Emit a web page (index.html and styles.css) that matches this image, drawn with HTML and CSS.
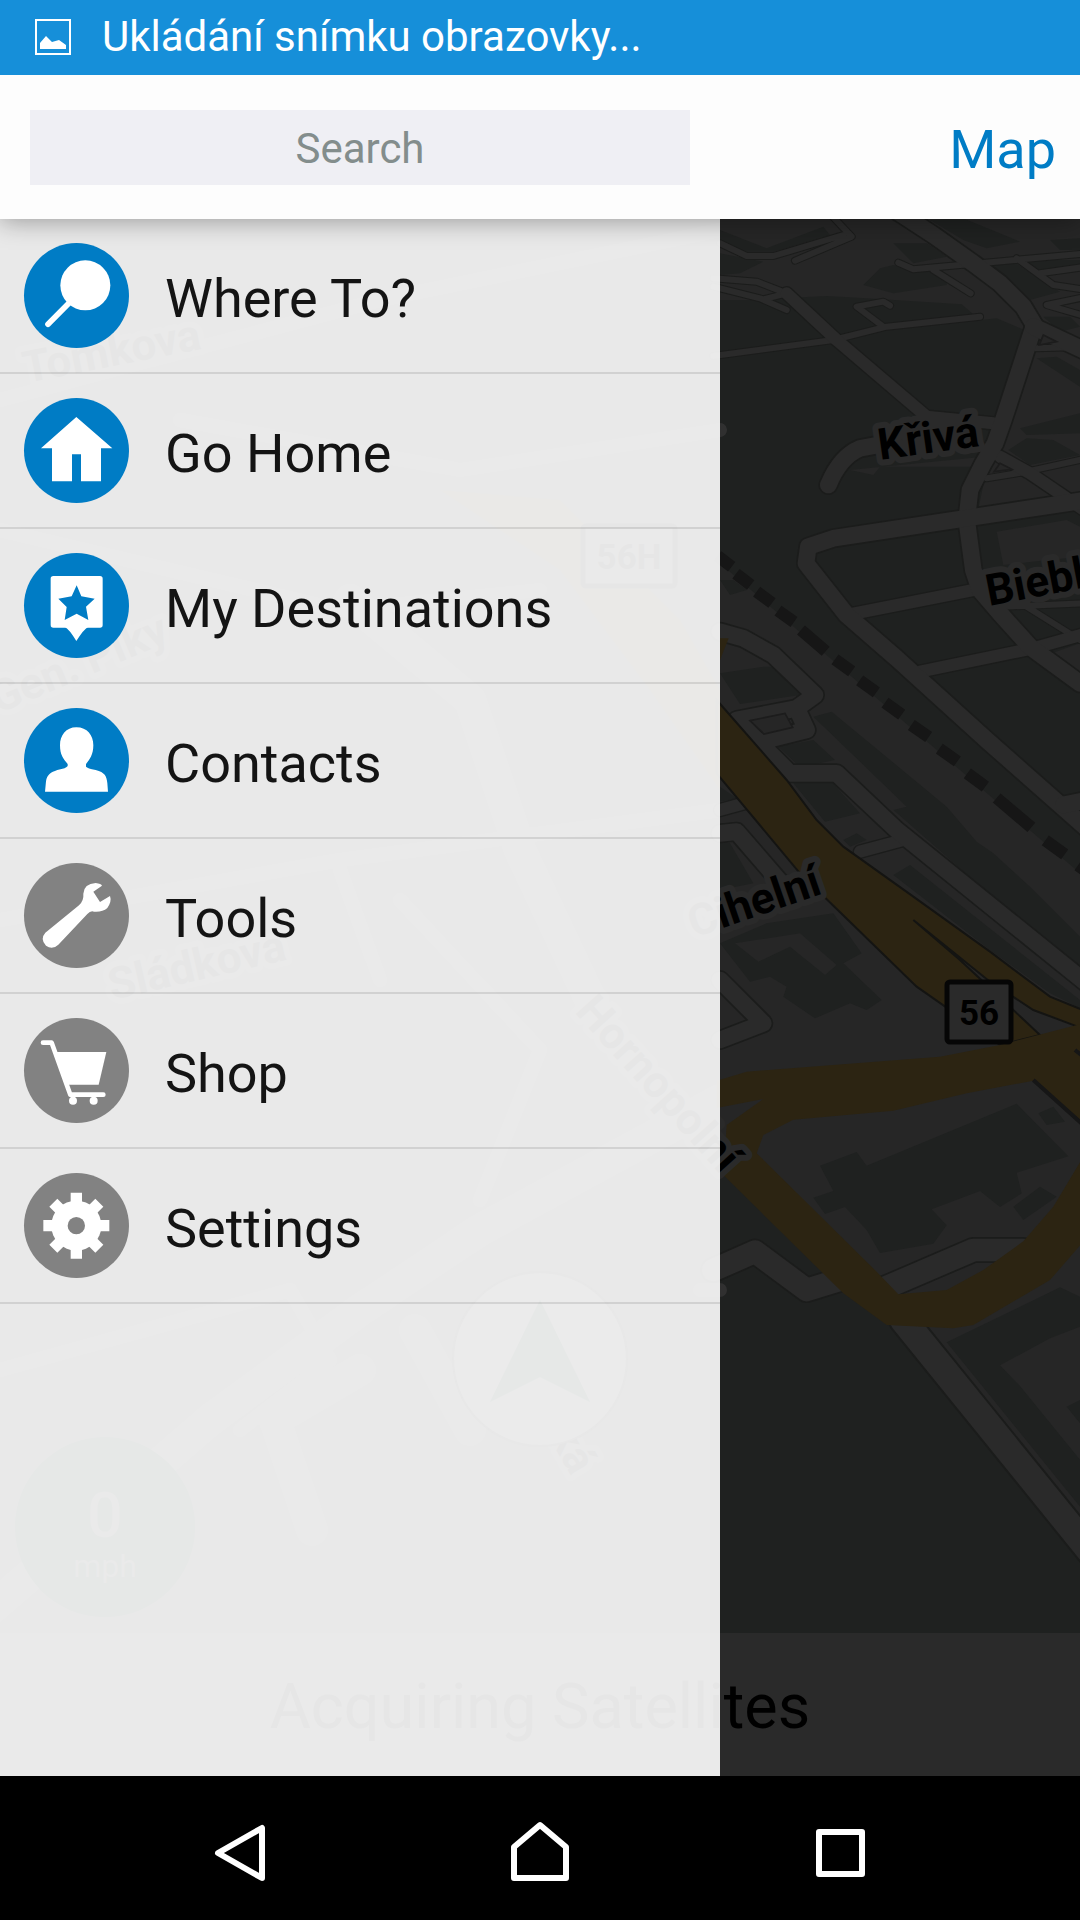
FILE: index.html
```html
<!DOCTYPE html>
<html lang="en">
    <head>
        <meta charset="utf-8">
        <meta name="viewport" content="width=device-width, initial-scale=1.0">
        <title>Navigation menu</title>
        <link rel="stylesheet" href="styles.css">
    </head>
    <body>
        <div id="wrapper">
            <div class="status-bar" lang="cs"> <!-- android notification ticker -->
                <svg class="status-icon" viewBox="0 0 36 36" aria-hidden="true">
                    <rect x="1" y="1" width="34" height="34" fill="none" stroke="#fff" stroke-width="2"/>
                    <path d="M5 30V24L11 17L17 23L24 21L31 26V30Z" fill="#fff"/>
                </svg>
                <span>Ukládání snímku obrazovky...</span>
            </div>
            <header>
                <input class="search" type="text" placeholder="Search" aria-label="Search">
                <a class="map-link" href="#map">Map</a>
            </header>
            <main>
                <svg class="map" id="map" viewBox="0 219 1080 1414" preserveAspectRatio="xMidYMid slice" aria-hidden="true">
                    <defs>
                        <!-- roads of the right half, drawn twice: casing, then surface -->
                        <g id="roads-wide">
                            <path d="M570 -10L700 75L820 160L900 220L970 290L1003 345L985 400L910 630L885 700L850 760L810 840L800 930L820 1080L840 1140L900 1210L990 1310L1140 1420"/>
                            <path d="M1000 350L1160 425M1160 870L400 985L325 1010L318 1060L440 1215L590 1345L860 1590L1160 1855"/>
                            <path d="M1090 1785L1160 1770M385 825Q420 740 480 715L560 700"/>
                            <path d="M60 1265L130 1285L220 1335L345 1455L290 1495L110 1530L270 1690L410 1690L590 1860L1160 2320M290 1495L320 1560L200 1590"/>
                            <path d="M60 2310L190 2440L60 2490M60 1870L110 1865L270 2050"/>
                        </g>
                        <g id="roads-mid">
                            <path d="M260 250L410 390L680 620L880 640M440 1215L820 1140M660 1385L1000 1315L1160 1270"/>
                            <path d="M900 740L990 790L1160 905M60 1800L150 1775M480 1925L610 1890"/>
                        </g>
                        <g id="roads-narrow">
                            <path d="M40 438L400 390L560 350L840 320M550 350L470 290L550 275L570 287"/>
                            <path d="M40 205L170 215L260 250M40 230L180 265L260 300M190 268L260 250"/>
                            <path d="M370 -10L455 80L285 152M60 100L140 138L220 138L430 75"/>
                            <path d="M595 158L640 178L1160 130M700 180L812 250M950 145L1060 225L1160 240M1020 190L1160 170M1160 260L1040 285L1160 320"/>
                            <path d="M860 805L980 785L1160 745M1010 415L1160 410"/>
                            <path d="M840 1150L910 1190L1160 1180M980 1190L1140 1290"/>
                        </g>
                    </defs>
                    <!-- ground -->
                    <rect class="park" y="219" width="1080" height="1414"/>
                    <!-- left half, stays behind the drawer -->
                    <path class="block" d="M0 219H720V330L420 480L0 420ZM0 440L330 560L480 640L720 700V1190L480 1260L120 1540L0 1600Z"/>
                    <g class="park">
                        <path d="M0 700L340 650L470 700L500 830L0 900ZM300 500L360 500L350 590L305 585Z"/>
                        <path d="M40 370L140 350L160 380L80 395ZM280 340L360 325L380 350L310 370ZM480 640L640 610L680 700L560 720ZM420 920L500 960L450 1060L400 1050ZM620 620L700 640L690 800L550 825L540 790Z"/>
                        <path d="M225 940L300 930L290 1000L230 990ZM310 970L380 960L370 1015L315 1010ZM130 1000L180 995L200 1025L150 1030Z"/>
                    </g>
                    <g class="road faint">
                        <path class="faint-wide" d="M-10 1610L210 1420L360 1310L480 1230L720 1100M360 1370L275 1420L312 1530M415 1330L470 1430M350 600L470 700L520 850L600 1020"/>
                        <path d="M0 920L340 860L720 810M340 870L380 980M0 400L380 300L720 230M180 420L460 470L720 430M0 530L340 610L540 590"/>
                        <path d="M0 1370L290 1290L330 1360L240 1430M480 1200L540 1050L400 900M720 1290L700 1290"/>
                    </g>
                    <path class="highway" d="M440 490L560 500L680 620L720 690V790L650 690L560 570Z"/>
                    <svg x="700" y="210" width="380" height="1430" viewBox="0 0 1140 4290">
                        <path class="block" d="M60 0H1140V910L1080 870L830 920L870 730L920 640L985 365L890 325L840 330L785 283L500 265L380 258L150 270L60 270Z"/>
                        <path class="block" d="M60 1060L1140 1990V3960L600 3370L520 3200L170 2850L60 2790ZM890 965L1100 930L1140 950V1040L910 1065ZM1055 1330L1140 1300V1430Z"/>
                        <path class="block" d="M450 780L850 740L870 770L540 770L520 795Z"/>
                        <g class="park">
                            <path d="M60 60L200 115L370 50L390 75L220 125L140 125L60 95ZM60 130L190 155L120 190L60 195ZM490 225L540 175L580 165L740 195L740 225L580 250Z"/>
                            <path d="M690 30L790 25L960 95L860 115L790 90ZM580 100L680 100L740 140L640 160ZM860 165L940 155L1080 245L970 275L930 240ZM1050 90L1140 85V120H1080ZM980 150H1140V170L1010 180Z"/>
                            <path d="M1010 445L1070 440L1140 480V530ZM960 655L1140 610V670L980 675ZM980 685L1060 690L1140 735L990 765L925 720ZM1030 320L1110 320L1140 350L1080 365ZM60 1110L100 1110L140 1140L90 1155Z"/>
                            <path d="M60 1390L190 1370L240 1370L300 1455L120 1482ZM235 1610L340 1590L405 1650L300 1672ZM280 1720L390 1710L480 1810L375 1835ZM60 1730L110 1765L60 1775ZM430 1890L470 1870L500 1890L450 1910Z"/>
                            <path d="M340 1520L395 1505L740 1790L830 1895L880 1930L990 2030L1140 2180V2290L580 1800L620 1790ZM580 1995L630 1965L1140 2370V2395L1050 2350L870 2220Z"/>
                            <path d="M60 1890L90 1900L160 2020L60 2040ZM60 2200L200 2140L400 2110L485 2230L430 2260L545 2370L500 2400L450 2380L345 2425L250 2360L260 2330L210 2300L150 2315Z"/>
                            <path d="M360 2867L470 2826L500 2867L950 2681L1105 2839L950 2888L965 2950L900 2991L840 2943L695 2998L740 3046L700 3101L540 3129L500 3060L435 2991L375 3012L340 2963L400 2943ZM1015 2710L1060 2690L1095 2735L1040 2745ZM940 2990L1020 2930L1070 2960L970 3030Z"/>
                            <path d="M740 3397L1080 3232L1140 3260V3350L1050 3385L900 3466L960 3528L1140 3749V3890ZM1100 3590L1140 3570V3640Z"/>
                        </g>
                        <path class="block" d="M105 2200L300 2170L410 2265L375 2295L270 2210L175 2255Z"/>
                        <use href="#roads-narrow" class="casing narrow"/>
                        <use href="#roads-mid" class="casing mid"/>
                        <use href="#roads-wide" class="casing wide"/>
                        <use href="#roads-narrow" class="road narrow"/>
                        <use href="#roads-mid" class="road mid"/>
                        <use href="#roads-wide" class="road wide"/>
                        <path class="block outlined" d="M150 1532L255 1510L278 1552L192 1572Z"/>
                        <path class="block outlined" d="M1030 375L1070 395L1018 405ZM900 760L935 778L882 785Z"/>
                        <path class="casing" stroke-width="78" d="M40 3180L165 3125L320 3240L450 3200M540 3240L820 3120L970 3120"/>
                        <path class="road" stroke-width="68" d="M40 3180L165 3125L320 3240L450 3200M540 3240L820 3120L970 3120"/>
                        <path class="casing" stroke-width="92" d="M610 3330L1180 4035"/>
                        <path class="road" stroke-width="80" d="M610 3330L1180 4035"/>
                        <!-- route 56 -->
                        <path class="highway" d="M60 1285H86L60 1350Z"/>
                        <path class="highway edge" d="M50 1470L260 1710L350 1830L430 1910L640 2060L870 2225L1050 2360L1160 2405V2460L1000 2400L870 2315L640 2130L780 2250L1020 2475L900 2505L650 2330L300 1990L50 1690Z"/>
                        <path class="highway" d="M50 2612L140 2585L720 2540L900 2505L1150 2440V2740L1000 2612L800 2650L580 2702L280 2729L190 2775L170 2830L530 3185L595 3253L740 3240L850 3180L970 3094L1060 2990L1150 2840V3095L1050 3210L820 3345L760 3355L560 3345L430 3250L70 2895L80 2745L190 2667L50 2694Z"/>
                        <path class="rail-edge" d="M1000 2610L1150 2745M1125 2520L1150 2540"/>
                        <!-- railway -->
                        <path class="rail" d="M53 1038l42 32M108 1091l44 34M170 1145l46 34M234 1202l48 34M303 1260l74 64M405 1348l50 36M479 1411l50 36M555 1478l50 36M634 1545l52 36M718 1616l54 38M802 1690l54 40M890 1764l104 88M1036 1891l58 42M1134 1966l58 42"/>
                    </svg>
                    <g class="street-names">
                        <text transform="translate(880 460) rotate(-8)">Křivá</text>
                        <text transform="translate(989 606) rotate(-11)">Biebl</text>
                        <text transform="translate(694 938) rotate(-19)">Cihelní</text>
                        <text transform="translate(26 383) rotate(-11)">Tomkova</text>
                        <text transform="translate(-2 714) rotate(-23)">Gen. Píky</text>
                        <text transform="translate(112 1000) rotate(-13)">Sládkova</text>
                        <text transform="translate(574 1012) rotate(48)">Hornopolní</text>
                        <text transform="translate(548 1436) rotate(60)">ká</text>
                    </g>
                    <g class="shield">
                        <rect x="947" y="982" width="64" height="60" rx="3"/>
                        <text x="979" y="1025">56</text>
                        <rect x="583" y="526" width="92" height="60" rx="3"/>
                        <text x="629" y="569">56H</text>
                    </g>
                    <circle class="compass" cx="540" cy="1359" r="87"/>
                    <path class="compass-arrow" d="M540 1300L590 1402L540 1377L490 1402Z"/>
                </svg>
                <div class="speed"><b>0</b><span>mph</span></div>
                <div class="gps">Acquiring Satellites</div>
                <nav class="drawer"> <!-- slides over the map -->
                    <a class="item" href="#where">
                        <svg class="icon" viewBox="0 0 315 315" aria-hidden="true">
                            <circle cx="184" cy="127" r="75"/>
                            <path d="M72 244L150 165" stroke="#fff" stroke-width="17" stroke-linecap="round"/>
                        </svg>
                        <span>Where To?</span>
                    </a>
                    <a class="item" href="#home">
                        <svg class="icon" viewBox="0 0 315 315" aria-hidden="true">
                            <path d="M157 57L265 151H231V250H171V169H144V250H84V151H51Z"/>
                        </svg>
                        <span>Go Home</span>
                    </a>
                    <a class="item" href="#destinations">
                        <svg class="icon" viewBox="0 0 315 315" aria-hidden="true">
                            <rect x="80" y="69" width="156" height="155" rx="8"/>
                            <path d="M123 222Q135 228 157 264Q180 228 192 222Z"/>
                            <path class="cut" d="M158 97L172 130L212 137L186 161L193 201L158 182L122 201L128 162L103 137L143 130Z"/>
                        </svg>
                        <span>My Destinations</span>
                    </a>
                    <a class="item" href="#contacts">
                        <svg class="icon" viewBox="0 0 315 315" aria-hidden="true">
                            <path d="M157 58C190 58 208 82 208 112C208 140 197 155 186 168V176Q190 181 215 186C243 193 248 205 250 225L252 251H63L66 220C69 200 80 193 100 186Q128 181 131 174V168C118 153 108 140 108 112C108 82 126 58 157 58Z"/>
                        </svg>
                        <span>Contacts</span>
                    </a>
                    <a class="item" href="#tools">
                        <svg class="icon gray" viewBox="0 0 315 315" aria-hidden="true">
                            <path d="M64 209L165 127Q180 112 178 92Q180 62 215 60Q232 62 234 68L208 86L228 117L258 99Q264 115 250 135Q235 148 210 146Q200 142 190 153L103 245Q85 262 66 248Q47 228 64 209Z"/>
                        </svg>
                        <span>Tools</span>
                    </a>
                    <a class="item" href="#shop">
                        <svg class="icon gray" viewBox="0 0 315 315" aria-hidden="true">
                            <path d="M57 74H83L139 230H238" fill="none" stroke="#fff" stroke-width="14" stroke-linecap="round" stroke-linejoin="round"/>
                            <path d="M92 102H247L224 200H128Z"/>
                            <circle cx="147" cy="248" r="12"/>
                            <circle cx="209" cy="248" r="12"/>
                        </svg>
                        <span>Shop</span>
                    </a>
                    <a class="item" href="#settings">
                        <svg class="icon gray" viewBox="0 0 315 315" aria-hidden="true">
                            <circle cx="157" cy="158" r="75"/>
                            <path d="M157 59V257M58 158H256M88 89L226 227M226 89L88 227" stroke="#fff" stroke-width="34"/>
                            <circle class="cut" cx="157" cy="158" r="26"/>
                        </svg>
                        <span>Settings</span>
                    </a>
                </nav>
            </main>
            <footer> <!-- android system keys -->
                <button type="button" aria-label="Back">
                    <svg viewBox="0 0 72 72"><path d="M14 41L58 16V66Z"/></svg>
                </button>
                <button type="button" aria-label="Home">
                    <svg viewBox="0 0 72 72"><path d="M10 35L36 13L62 35V66H10Z"/></svg>
                </button>
                <button type="button" aria-label="Recent apps">
                    <svg viewBox="0 0 72 72"><path d="M15 20H58V62H15Z"/></svg>
                </button>
            </footer>
        </div>
    </body>
</html>
```
FILE: styles.css
```css
:root{
    --blue: #007cc5;
    --gray: #828282;
    --road: #2a2a2a;
    --block: #262626;
    --park: #1f2120;
    --highway: #2c2412;
}
*{
    margin: 0;
    padding: 0;
    box-sizing: border-box;
    font-family: Roboto, sans-serif;
}
#wrapper{
    min-height: 100vh;
    display: flex;
    flex-direction: column;
    overflow: hidden;
}
/* top bars */
.status-bar{
    height: 75px;
    padding: 0 35px 2px;
    display: flex;
    align-items: center;
    gap: 31px;
    background-color: #168fd9;
    color: #fff;
    font-size: 42px;
    position: relative; /* keeps the header shadow off it */
    z-index: 2;
}
.status-icon{
    width: 36px;
    height: 36px;
}
header{
    height: 144px;
    padding: 0 24px 0 30px;
    display: flex;
    justify-content: space-between;
    align-items: center;
    background-color: #fdfdfd;
    box-shadow: 0 2px 24px rgba(0,0,0,.35);
    position: relative; /* shadow must fall on the map */
    z-index: 1;
}
.search{
    width: calc(66.667vw - 60px); /* lines up with the drawer */
    height: 75px;
    padding-top: 2px;
    border: none;
    background-color: #efeff4;
    font-size: 42px;
    text-align: center;
}
.search::placeholder{
    color: #838d8c;
}
.map-link{
    padding-top: 4px;
    color: var(--blue);
    font-size: 54px;
    text-decoration: none;
}
/* map */
main{
    flex: 1;
    display: flex;
    flex-direction: column;
    position: relative;
    background-color: var(--park);
}
.map{
    flex: 1 1 0;
    min-height: 0;
    width: 100%;
    display: block;
}
.park{ fill: var(--park); }
.block{ fill: var(--block); }
.outlined{
    stroke: #1c1c1c;
    stroke-width: 5;
}
.road, .casing{
    fill: none;
    stroke: var(--road);
    stroke-linecap: round;
    stroke-linejoin: round;
}
.casing{ stroke: #1b1c1b; }
.road.wide{ stroke-width: 50; }
.road.mid{ stroke-width: 36; }
.road.narrow{ stroke-width: 18; }
.casing.wide{ stroke-width: 60; }
.casing.mid{ stroke-width: 44; }
.casing.narrow{ stroke-width: 24; }
.faint{
    stroke: #303030;
    stroke-width: 14;
}
.faint-wide{ stroke-width: 32; }
.highway{ fill: var(--highway); }
.edge{
    stroke: #141412;
    stroke-width: 6;
}
.rail, .rail-edge{
    fill: none;
    stroke: #161616;
    stroke-width: 36;
}
.rail-edge{ stroke-width: 12; }
.street-names text{
    font-size: 44px;
    font-weight: 700;
    fill: #000;
    stroke: var(--road);
    stroke-width: 12;
    stroke-linejoin: round;
    paint-order: stroke;
}
.shield rect{
    fill: var(--road);
    stroke: #060606;
    stroke-width: 5;
}
.shield text{
    font-size: 35px;
    font-weight: 700;
    text-anchor: middle;
}
.compass{
    fill: #343434;
    stroke: #141414;
    stroke-width: 2;
}
.compass-arrow{ fill: #00180e; }
.speed{
    width: 180px;
    height: 180px;
    padding-top: 18px;
    border-radius: 50%;
    position: absolute; /* floats over the map */
    left: 15px;
    bottom: 159px;
    display: flex;
    flex-direction: column;
    align-items: center;
    justify-content: center;
    background-color: #00180e;
    color: var(--road);
    font-size: 32px;
    line-height: 40px;
}
.speed b{
    font-size: 63px;
    font-weight: 500;
    line-height: 60px;
}
.gps{
    height: 143px;
    display: flex;
    align-items: center;
    justify-content: center;
    padding-top: 4px;
    background-color: var(--road);
    color: #000;
    font-size: 63px;
}
/* drawer */
.drawer{
    width: 66.667%;
    position: absolute;
    top: 0;
    bottom: 0;
    left: 0;
    background-color: rgba(255,255,255,.9);
}
.item{
    height: 155px;
    padding: 0 24px;
    display: flex;
    align-items: center;
    gap: 36px;
    border-bottom: 2px solid rgba(0,0,0,.1);
    color: #141414;
    font-size: 54px;
    text-decoration: none;
}
.item span{
    padding-top: 5px;
}
.icon{
    width: 105px;
    height: 105px;
    border-radius: 50%;
    background-color: var(--blue);
    fill: #fff;
}
.icon .cut{ fill: var(--blue); }
.icon.gray{ background-color: var(--gray); }
.icon.gray .cut{ fill: var(--gray); }
/* system keys */
footer{
    height: 144px;
    padding: 0 8.333%;
    display: grid;
    grid-template-columns: repeat(3,1fr);
    place-items: center;
    background-color: #000;
}
footer button{
    width: 72px;
    height: 72px;
    border: none;
    background: none;
}
footer svg{
    width: 72px;
    height: 72px;
    display: block;
    fill: none;
    stroke: #fff;
    stroke-width: 6;
    stroke-linejoin: round;
}
```
